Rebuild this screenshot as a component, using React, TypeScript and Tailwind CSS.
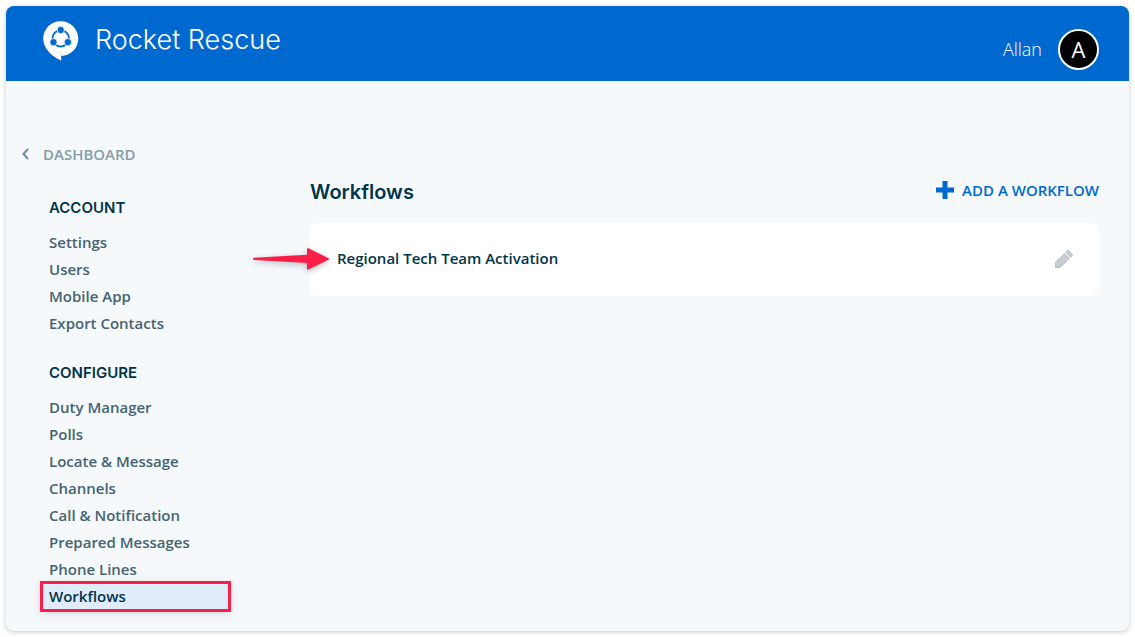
import React from "react";

const account = ["Settings", "Users", "Mobile App", "Export Contacts"];
const configure = [
  "Duty Manager",
  "Polls",
  "Locate & Message",
  "Channels",
  "Call & Notification",
  "Prepared Messages",
  "Phone Lines",
  "Workflows",
];

function Logo() {
  return (
    <svg width="36" height="40" viewBox="0 0 36 40" aria-hidden="true">
      <path
        fill="#fff"
        d="M17.7 0.2C27.4 0.2 35.3 8 35.3 17.6S27.8 34.8 18.2 35V39.6C9.5 36 .2 28 .2 17.6 .2 8 8 .2 17.7 .2Z"
      />
      <path fill="#0069cf" fillOpacity="0.25" d="M18 30.5V39.6L18.9 35Z" />
      <circle
        cx="17.7"
        cy="17.4"
        r="8.2"
        fill="none"
        stroke="#0069cf"
        strokeWidth="1.9"
      />
      <g fill="#0069cf" stroke="#fff" strokeWidth="0.8">
        <circle cx="17.7" cy="9" r="3.7" />
        <circle cx="10.5" cy="21.2" r="3.7" />
        <circle cx="24.9" cy="21.2" r="3.7" />
      </g>
    </svg>
  );
}

function NavGroup({ title, items, active }: { title: string; items: string[]; active?: string }) {
  return (
    <section>
      <h2 className="px-[7px] font-['Inter',sans-serif] text-[15px] leading-5 font-semibold text-[#003549]">
        {title}
      </h2>
      <ul className="mt-[11px]">
        {items.map((item) => (
          <li key={item}>
            <a
              href="#"
              aria-current={item === active ? "page" : undefined}
              className={
                item === active
                  ? "block bg-[#e0ecfa] px-[7px] leading-[27px] text-[#003549] shadow-[0_2px_8px_2px_rgba(0,0,0,0.12)] outline-3 -outline-offset-1 outline-[#fb1e48]"
                  : "block px-[7px] leading-[27px] text-[#46636f]"
              }
            >
              {item}
            </a>
          </li>
        ))}
      </ul>
    </section>
  );
}

export default function App() {
  return (
    <div className="flex min-h-screen bg-white p-1.5 font-['Open_Sans',sans-serif] text-[15px] font-semibold">
      <div className="flex flex-1 flex-col overflow-hidden rounded-lg bg-[#f5f9fc] shadow-[0_1px_5px_rgba(0,0,0,0.22)]">
        <header className="flex h-[75px] items-center justify-between bg-[#0069cf] pr-[30px] pl-[37px] font-normal text-white">
          <a href="#" className="mb-1.5 flex items-start gap-4">
            <Logo />
            <span className="font-['Inter',sans-serif] text-[27px] leading-[38px] font-light">
              Rocket Rescue
            </span>
          </a>
          <button type="button" className="mt-3 flex items-center gap-4 text-[18px] font-light">
            Allan
            <span className="flex size-[41px] items-center justify-center rounded-full border-2 border-white bg-black text-[22px] font-normal">
              A
            </span>
          </button>
        </header>

        <div className="flex flex-1 items-start pt-[61px] pr-[30px] pb-5">
          <aside className="w-[304px] shrink-0">
            <a href="#" className="ml-4 flex items-center gap-[14px] leading-6 text-[#869da6]">
              <svg width="7" height="12" viewBox="0 0 7 12" fill="none" stroke="#718b96" strokeWidth="2" aria-hidden="true">
                <path d="M6 1 1.5 6 6 11" />
              </svg>
              DASHBOARD
            </a>
            <nav className="mt-8 ml-9 flex w-[187px] flex-col gap-[26px]">
              <NavGroup title="ACCOUNT" items={account} />
              <NavGroup title="CONFIGURE" items={configure} active="Workflows" />
            </nav>
          </aside>

          <main className="min-w-0 flex-1 pt-9">
            <div className="flex items-start justify-between">
              <h1 className="font-['Inter',sans-serif] text-[20px] leading-7 font-semibold text-[#003549]">
                Workflows
              </h1>
              <button type="button" className="flex items-center gap-2 leading-6 text-[#0069cf]">
                <svg width="18" height="18" viewBox="0 0 18 18" aria-hidden="true">
                  <path fill="#0069cf" d="M6.5 0h5v6.5H18v5h-6.5V18h-5v-6.5H0v-5h6.5Z" />
                </svg>
                ADD A WORKFLOW
              </button>
            </div>
            <article className="relative mt-[17px] flex h-[73px] items-center justify-between rounded-lg bg-white pr-[26px] pb-0.5 pl-[27px]">
              <svg
                width="77"
                height="22"
                viewBox="0 0 77 22"
                aria-hidden="true"
                className="absolute top-[25px] -left-[57px] drop-shadow-[0_2px_3px_rgba(0,0,0,0.25)]"
              >
                <path
                  fill="#fb1e48"
                  d="M1 9.8 54 6.8V1.2C54 .1 54.8 0 55.5.3L75.5 10.2C76.4 10.7 76.4 11.3 75.5 11.8L55.5 21.5C54.8 21.8 54 21.6 54 20.7V15L1 12.1C-.3 12-.3 9.9 1 9.8Z"
                />
              </svg>
              <a href="#" className="text-[#003549]">
                Regional Tech Team Activation
              </a>
              <button type="button" aria-label="Edit workflow">
                <svg width="18" height="18" viewBox="0 0 18 18" fill="#c5cdd2" stroke="#929fa6" strokeWidth="0.6" aria-hidden="true" className="block">
                  <path d="M.3 12.7 9.6 3.5 14.3 8.2 5 17.7H.3Z" />
                  <path d="M10.8 2.3 12.4.7Q13 .2 13.6.7L17.3 4.4Q17.8 5 17.3 5.6L15.6 7.1Z" />
                </svg>
              </button>
            </article>
          </main>
        </div>
      </div>
    </div>
  );
}
